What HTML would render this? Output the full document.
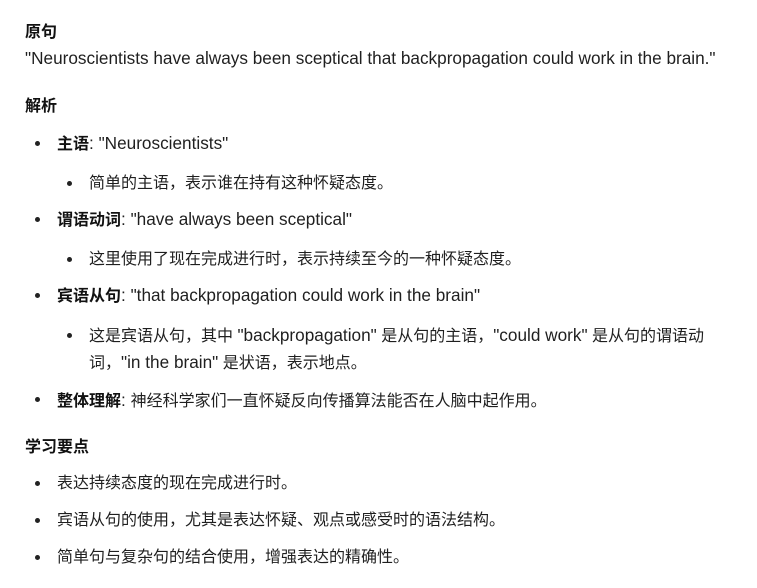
<!DOCTYPE html>
<html><head><meta charset="utf-8"><style>
html,body{margin:0;padding:0;background:#fff;width:757px;height:588px;overflow:hidden}
body{font-family:"Liberation Sans","Noto Sans CJK SC",sans-serif;font-size:16px;color:#1f1f1f;position:relative}
.l{position:absolute;white-space:nowrap;line-height:22px}
.h{font-weight:bold;color:#111}
b{color:#111}
.e{font-size:17.2px}
.d{position:absolute;width:5px;height:5px;border-radius:50%;background:#222}
</style></head><body>
<div class="l h" style="left:25px;top:22px">原句</div>
<div class="l" style="left:25px;top:47px"><span class="e">"Neuroscientists have always been sceptical that backpropagation could work in the brain."</span></div>
<div class="l h" style="left:25px;top:96px">解析</div>

<div class="d" style="left:35px;top:141px"></div>
<div class="l" style="left:57px;top:132px"><b>主语</b><span class="e">: "Neuroscientists"</span></div>
<div class="d" style="left:67px;top:181px"></div>
<div class="l" style="left:89px;top:173px">简单的主语，表示谁在持有这种怀疑态度。</div>

<div class="d" style="left:35px;top:217px"></div>
<div class="l" style="left:57px;top:208px"><b>谓语动词</b><span class="e">: "have always been sceptical"</span></div>
<div class="d" style="left:67px;top:257px"></div>
<div class="l" style="left:89px;top:249px">这里使用了现在完成进行时，表示持续至今的一种怀疑态度。</div>

<div class="d" style="left:35px;top:293px"></div>
<div class="l" style="left:57px;top:284px"><b>宾语从句</b><span class="e">: "that backpropagation could work in the brain"</span></div>
<div class="d" style="left:67px;top:333px"></div>
<div class="l" style="left:89px;top:324px">这是宾语从句，其中 <span class="e">"backpropagation"</span> 是从句的主语，<span class="e">"could work"</span> 是从句的谓语动</div>
<div class="l" style="left:89px;top:351px">词，<span class="e">"in the brain"</span> 是状语，表示地点。</div>

<div class="d" style="left:35px;top:397px"></div>
<div class="l" style="left:57px;top:389px"><b>整体理解</b><span class="e">: </span>神经科学家们一直怀疑反向传播算法能否在人脑中起作用。</div>

<div class="l h" style="left:25px;top:437px">学习要点</div>
<div class="d" style="left:35px;top:481px"></div>
<div class="l" style="left:57px;top:473px">表达持续态度的现在完成进行时。</div>
<div class="d" style="left:35px;top:518px"></div>
<div class="l" style="left:57px;top:510px">宾语从句的使用，尤其是表达怀疑、观点或感受时的语法结构。</div>
<div class="d" style="left:35px;top:555px"></div>
<div class="l" style="left:57px;top:547px">简单句与复杂句的结合使用，增强表达的精确性。</div>
</body></html>
